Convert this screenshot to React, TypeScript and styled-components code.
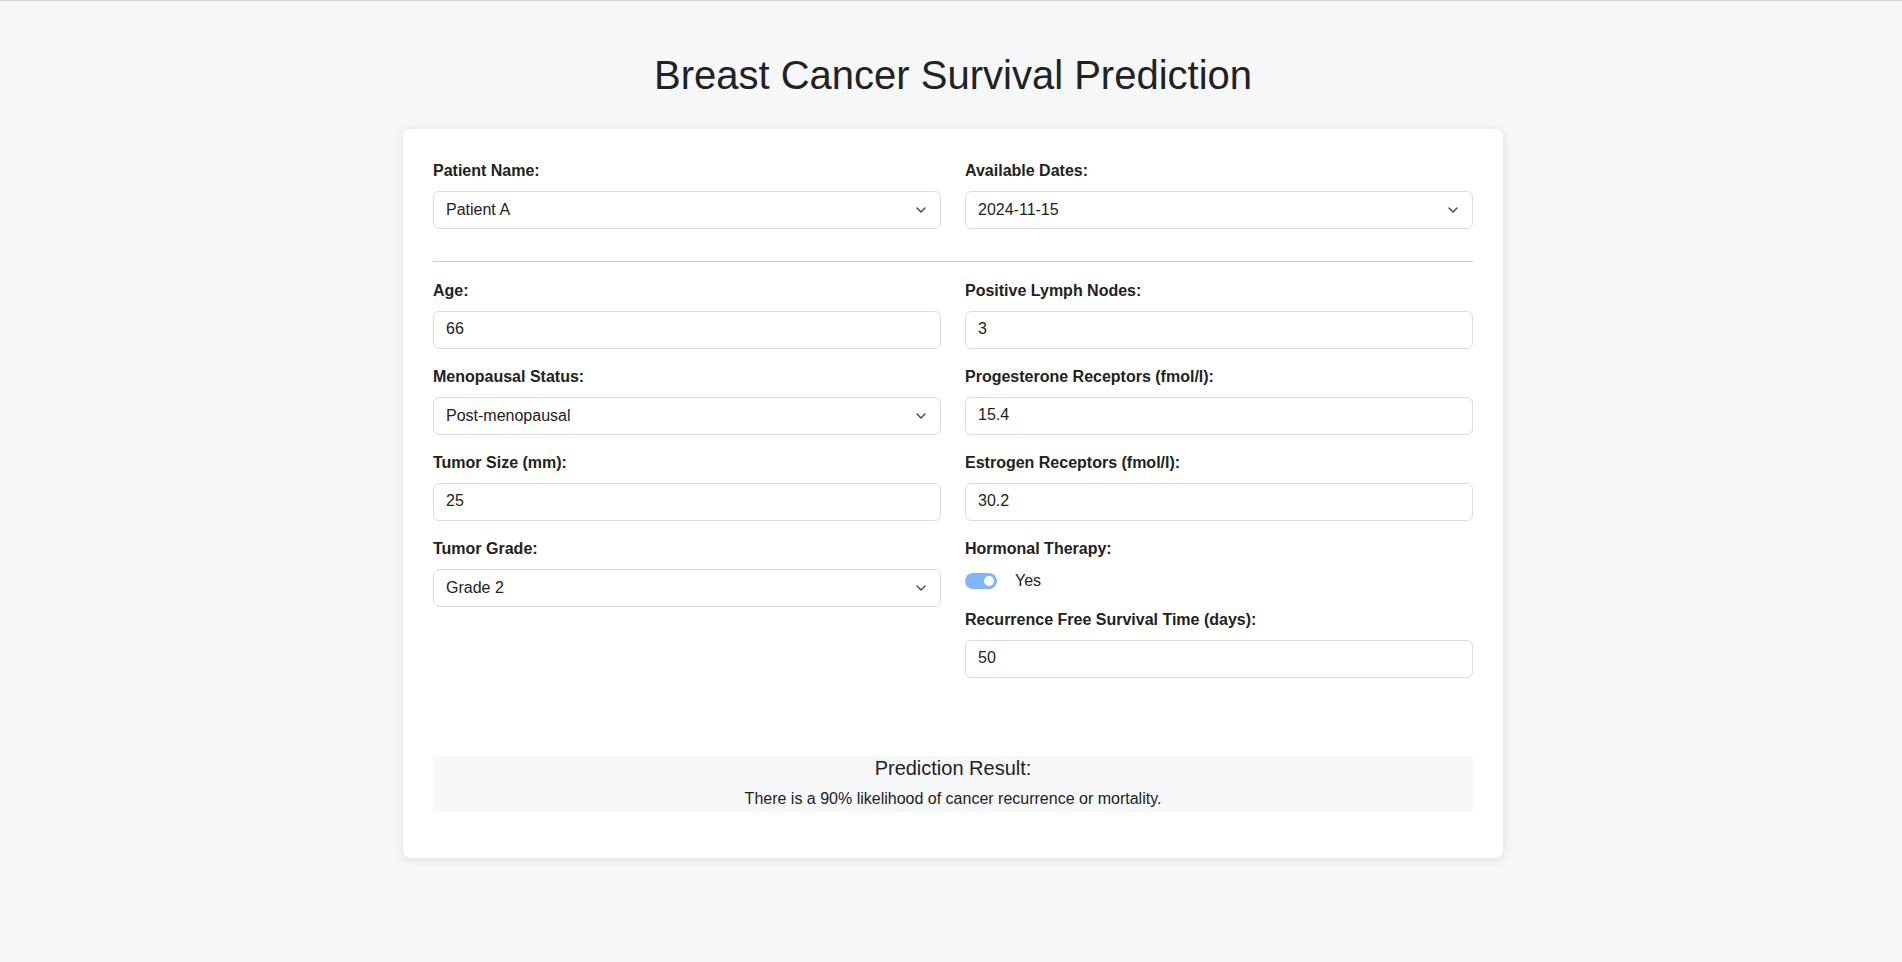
import React, { useState } from 'react';
import styled, { createGlobalStyle } from 'styled-components';

const GlobalStyle = createGlobalStyle`
	html, body {
		margin: 0;
		padding: 0;
		background: #f6f7f9;
	}
	body {
		font-family: "Liberation Sans", Arial, Helvetica, sans-serif;
		color: #222;
		border-top: 1px solid #d6d8db;
	}
	* {
		box-sizing: border-box;
	}
`;

const Page = styled.div`
	padding: 51px 20px 60px 24px;
`;

const Title = styled.h1`
	margin: 0 0 31px;
	font-size: 40px;
	font-weight: 400;
	line-height: 46px;
	text-align: center;
	color: #222;
`;

const Card = styled.div`
	max-width: 1100px;
	margin: 0 auto;
	padding: 31px 30px 46px;
	background: #fff;
	border-radius: 8px;
	box-shadow: 0 2px 10px rgba(0, 0, 0, 0.1);
`;

const TwoCols = styled.div`
	display: grid;
	grid-template-columns: 1fr 1fr;
	column-gap: 24px;
`;

const Column = styled.div`
	display: flex;
	flex-direction: column;
`;

const Divider = styled.hr`
	margin: 15px 0 18px;
	border: 0;
	border-top: 1px solid #cccccc;
`;

const Field = styled.div`
	margin-bottom: 17px;
`;

const Label = styled.label`
	display: block;
	margin-bottom: 10px;
	font-size: 16px;
	font-weight: 700;
	line-height: 21px;
	color: #222;
`;

const TextInput = styled.input`
	display: block;
	width: 100%;
	height: 38px;
	padding: 0 12px 2px;
	font-family: inherit;
	font-size: 16px;
	color: #222;
	background: #fff;
	border: 1px solid #d9dce1;
	border-radius: 6px;
	outline: none;
`;

const SelectWrap = styled.div`
	position: relative;
`;

const Select = styled.select`
	display: block;
	width: 100%;
	height: 38px;
	padding: 0 36px 2px 12px;
	font-family: inherit;
	font-size: 16px;
	color: #222;
	background: #fff;
	border: 1px solid #d9dce1;
	border-radius: 6px;
	appearance: none;
	outline: none;
`;

const Chevron = styled.svg`
	position: absolute;
	right: 15px;
	top: 50%;
	margin-top: -3px;
	pointer-events: none;
`;

const SwitchRow = styled.div`
	display: flex;
	align-items: center;
	gap: 18px;
	height: 23px;
	font-size: 16px;
	color: #222;
`;

const SwitchTrack = styled.button<{ $on: boolean }>`
	display: flex;
	align-items: center;
	justify-content: ${({ $on }) => ($on ? 'flex-end' : 'flex-start')};
	width: 32px;
	height: 16px;
	padding: 0 3px;
	border: 0;
	border-radius: 8px;
	background: ${({ $on }) => ($on ? '#80b4fc' : '#c9ccd1')};
	cursor: pointer;
`;

const Knob = styled.span`
	width: 10px;
	height: 10px;
	border-radius: 50%;
	background: #fff;
`;

const Result = styled.div`
	margin-top: 61px;
	padding: 1px 0 4px;
	background: #f6f7f9;
	text-align: center;
`;

const ResultTitle = styled.h3`
	margin: 0;
	font-size: 20px;
	font-weight: 400;
	line-height: 23px;
	color: #222;
`;

const ResultText = styled.p`
	margin: 10px 0 0;
	font-size: 16px;
	line-height: 18px;
	color: #222;
`;

const Dropdown = ({ value, options }: { value: string; options: string[] }) => (
	<SelectWrap>
		<Select defaultValue={value}>
			{options.map((o) => (
				<option key={o}>{o}</option>
			))}
		</Select>
		<Chevron width="10" height="6" viewBox="0 0 10 6">
			<path d="M1 1l4 4 4-4" fill="none" stroke="#444" strokeWidth="1.4" strokeLinecap="round" strokeLinejoin="round" />
		</Chevron>
	</SelectWrap>
);

const App = () => {
	const [hormonal, setHormonal] = useState(true);

	return (
		<Page>
			<GlobalStyle />
			<Title>Breast Cancer Survival Prediction</Title>
			<Card>
				<TwoCols>
					<Field>
						<Label>Patient Name:</Label>
						<Dropdown value="Patient A" options={['Patient A', 'Patient B', 'Patient C']} />
					</Field>
					<Field>
						<Label>Available Dates:</Label>
						<Dropdown value="2024-11-15" options={['2024-11-15', '2024-10-02', '2024-08-21']} />
					</Field>
				</TwoCols>

				<Divider />

				<TwoCols>
					<Column>
						<Field>
							<Label>Age:</Label>
							<TextInput defaultValue="66" />
						</Field>
						<Field>
							<Label>Menopausal Status:</Label>
							<Dropdown value="Post-menopausal" options={['Pre-menopausal', 'Post-menopausal']} />
						</Field>
						<Field>
							<Label>Tumor Size (mm):</Label>
							<TextInput defaultValue="25" />
						</Field>
						<Field>
							<Label>Tumor Grade:</Label>
							<Dropdown value="Grade 2" options={['Grade 1', 'Grade 2', 'Grade 3']} />
						</Field>
					</Column>
					<Column>
						<Field>
							<Label>Positive Lymph Nodes:</Label>
							<TextInput defaultValue="3" />
						</Field>
						<Field>
							<Label>Progesterone Receptors (fmol/l):</Label>
							<TextInput defaultValue="15.4" />
						</Field>
						<Field>
							<Label>Estrogen Receptors (fmol/l):</Label>
							<TextInput defaultValue="30.2" />
						</Field>
						<Field>
							<Label>Hormonal Therapy:</Label>
							<SwitchRow>
								<SwitchTrack $on={hormonal} onClick={() => setHormonal(!hormonal)} aria-label="Hormonal Therapy">
									<Knob />
								</SwitchTrack>
								<span>{hormonal ? 'Yes' : 'No'}</span>
							</SwitchRow>
						</Field>
						<Field>
							<Label>Recurrence Free Survival Time (days):</Label>
							<TextInput defaultValue="50" />
						</Field>
					</Column>
				</TwoCols>

				<Result>
					<ResultTitle>Prediction Result:</ResultTitle>
					<ResultText>There is a 90% likelihood of cancer recurrence or mortality.</ResultText>
				</Result>
			</Card>
		</Page>
	);
};

export default App;
